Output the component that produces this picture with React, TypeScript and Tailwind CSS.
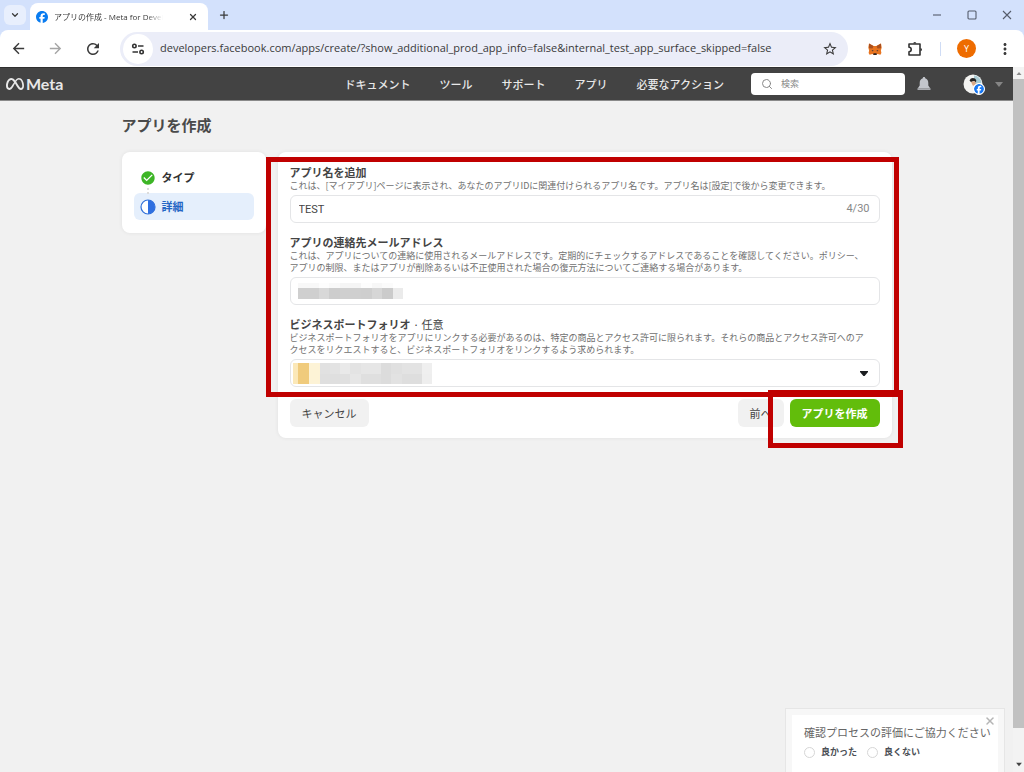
import { useState, type ReactNode } from "react";
import { FaFacebook, FaMeta } from "react-icons/fa6";
import {
  MdArrowBack,
  MdArrowForward,
  MdCheckCircle,
  MdMoreVert,
  MdRefresh,
  MdStarBorder,
} from "react-icons/md";
import { ChevronDown, Plus, Search, X } from "lucide-react";

const NAV_LINKS = ["ドキュメント", "ツール", "サポート", "アプリ", "必要なアクション"];

const WINDOW_BUTTONS = [
  { label: "最小化", path: "M1 5h8" },
  { label: "最大化", path: "M2 1h6a1 1 0 0 1 1 1v6a1 1 0 0 1-1 1H2a1 1 0 0 1-1-1V2a1 1 0 0 1 1-1z" },
  { label: "閉じる", path: "M1 1l8 8M9 1L1 9" },
];

const EMAIL_MOSAIC = [
  { height: "h-[5px]", colors: ["#f8f8f8", "#f8f8f8", "#fdfdfd", "#f9f9f9", "#f5f5f5", "#f5f5f5", "#fdfdfd", "#f7f7f7", "#fbfbfb", "#ffffff"] },
  { height: "h-[11px]", colors: ["#cfcfcf", "#cfcfcf", "#d8d8d8", "#cdcdcd", "#cfcfcf", "#cfcfcf", "#cecece", "#d6d6d6", "#cbcbcb", "#ebebeb"] },
];

const PORTFOLIO_MOSAIC = [
  { height: "h-[11px]", colors: ["#e1e1e1", "#e3e3e3", "#e9e9e9", "#e3e3e3", "#e6e6e6", "#e6e6e6", "#dcdcdc", "#e0e0e0", "#e3e3e3", "#e3e3e3", "#efefef"] },
  { height: "h-[10px]", colors: ["#dfdfdf", "#dfdfdf", "#e0e0e0", "#e6e6e6", "#dfdfdf", "#dfdfdf", "#dcdcdc", "#e2e2e2", "#dedede", "#dedede", "#eeeeee"] },
];

function TuneIcon() {
  return (
    <svg viewBox="0 0 14 14" className="size-3.5" fill="none" stroke="#333" strokeWidth="1.6">
      <circle cx="3.4" cy="4" r="1.7" />
      <path d="M7 4h5.5M1.5 10h5.5" />
      <circle cx="10.6" cy="10" r="1.7" />
    </svg>
  );
}

function FoxIcon() {
  return (
    <svg viewBox="0 0 14 14" className="size-3.5">
      <path d="M1 1.500l4.500 2.500h3L13 1.500l.7 4-.8 3 .5 2.400-1 1.800-3-.6-1.100 1H5.700l-1.100-1-3 .6-1-1.800.5-2.400-.8-3z" fill="#e8741f" />
      <path d="M1 1.500l4.500 2.500-1 2.500L1 6.200zM13 1.500L8.500 4l1 2.500 3.500-.3z" fill="#a9501f" />
      <path d="M3.500 8l2 .4-.6 1.200zM10.500 8l-2 .4.600 1.200z" fill="#263040" />
      <path d="M5.500 11.200h3l.3 1.200-.8.700H6l-.8-.7z" fill="#2b2320" />
    </svg>
  );
}

function PuzzleIcon() {
  return (
    <svg viewBox="0 0 18 18" className="size-[18px]" fill="none" stroke="#333" strokeWidth="1.6" strokeLinejoin="round">
      <path d="M3 4h11v11H3v-3.300a2.200 2.200 0 0 0 0-4.400z" />
      <path d="M7.200 3.600a1.600 1.600 0 0 1 3.200 0zM14.400 8a1.600 1.600 0 0 1 0 3.200z" fill="#333" stroke="none" />
    </svg>
  );
}

function BellIcon() {
  return (
    <svg viewBox="0 0 14 14" className="size-3.5" fill="#c3c6cc">
      <path d="M7 0c.8 0 1.200.5 1.200 1.200C10.300 1.800 11.300 3.500 11.300 6v2.500L13 11H1l1.700-2.500V6c0-2.500 1-4.200 3.100-4.800C5.800.5 6.200 0 7 0z" />
      <path d="M.5 11.300h13v1.500H.5z" />
    </svg>
  );
}

function HalfCircleIcon() {
  return (
    <svg viewBox="0 0 16 16" className="size-4">
      <circle cx="8" cy="8" r="7" fill="#fff" stroke="#2f6fd8" strokeWidth="1.2" />
      <path d="M8 1a7 7 0 0 1 0 14z" fill="#2f6fe0" />
    </svg>
  );
}

function BrowserChrome() {
  return (
    <header className="bg-[#d3e1fc] font-['Open_Sans','Noto_Sans_CJK_JP',sans-serif] text-[#3a3a3a]">
      <div className="flex h-[30px] items-center pl-1">
        <button aria-label="タブを検索" className="flex h-5 w-[22px] items-center justify-center rounded-md bg-[#e8effd]">
          <ChevronDown className="size-2.5" strokeWidth={3} />
        </button>
        <div className="ml-1 flex h-[27px] w-[178px] items-center self-end rounded-t-lg bg-white pr-2.5 pl-1.5">
          <FaFacebook className="size-3 shrink-0 text-[#0a7cf0]" />
          <span className="ml-1.5 mask-r-from-85% text-[8px] whitespace-nowrap">
            アプリの作成 - Meta for Devel
          </span>
          <button aria-label="タブを閉じる" className="ml-auto">
            <X className="size-2.5" strokeWidth={3} />
          </button>
        </div>
        <button aria-label="新しいタブ" className="ml-2.5">
          <Plus className="size-3" strokeWidth={2.5} />
        </button>
        <div className="ml-auto flex items-center gap-[25px] pr-3">
          {WINDOW_BUTTONS.map(({ label, path }) => (
            <button key={label} aria-label={label}>
              <svg viewBox="0 0 10 10" className="size-2.5" fill="none" stroke="#555c6b" strokeWidth="1.1">
                <path d={path} />
              </svg>
            </button>
          ))}
        </div>
      </div>

      <div className="flex h-[37px] items-center rounded-t-lg bg-white px-2.5">
        <div className="flex items-center gap-5">
          <button aria-label="戻る">
            <MdArrowBack className="size-[17px]" />
          </button>
          <button aria-label="進む" className="text-[#a5a5a5]">
            <MdArrowForward className="size-[17px]" />
          </button>
          <button aria-label="再読み込み">
            <MdRefresh className="size-[18px]" />
          </button>
        </div>
        <div className="ml-[18px] flex h-[34px] flex-1 items-center rounded-full bg-[#ebedf8] pr-2.5 pl-[3px]">
          <button aria-label="サイト情報" className="flex size-[30px] items-center justify-center rounded-full bg-white">
            <TuneIcon />
          </button>
          <input
            aria-label="アドレスバー"
            className="ml-[7px] min-w-0 flex-1 bg-transparent text-[11px] outline-none"
            defaultValue="developers.facebook.com/apps/create/?show_additional_prod_app_info=false&internal_test_app_surface_skipped=false"
          />
          <button aria-label="ブックマーク">
            <MdStarBorder className="size-4" />
          </button>
        </div>
        <div className="ml-5 flex items-center">
          <button aria-label="MetaMask">
            <FoxIcon />
          </button>
          <button aria-label="拡張機能" className="ml-6">
            <PuzzleIcon />
          </button>
          <span className="ml-4 h-3.5 w-px bg-[#cfdcf5]" />
          <button className="ml-4 flex size-[19px] items-center justify-center rounded-full bg-[#ee6c00] text-[9px] text-white">
            Y
          </button>
          <button aria-label="メニュー" className="ml-5">
            <MdMoreVert className="size-[18px]" />
          </button>
        </div>
      </div>
    </header>
  );
}

function SiteHeader() {
  return (
    <header className="flex h-[34px] items-center border-y border-[#2f2f2f] border-b-[#8a8a8a] bg-[#434343] pr-2.5 pl-1.5 text-[#e8e8e8]">
      <a href="#" className="flex items-center gap-0.5">
        <FaMeta className="size-[18px]" />
        <span className="font-['Lato',sans-serif] text-base leading-4 font-bold">Meta</span>
      </a>
      <nav className="ml-auto flex gap-[29px] text-[11px] font-medium">
        {NAV_LINKS.map((label) => (
          <a key={label} href="#">
            {label}
          </a>
        ))}
      </nav>
      <label className="ml-[27px] flex h-[22px] w-[154px] items-center rounded-sm bg-white pl-2.5 text-[#888]">
        <Search className="size-3" />
        <input
          aria-label="検索"
          placeholder="検索"
          className="ml-2 w-24 text-[9px] outline-none placeholder:text-[#888]"
        />
      </label>
      <button aria-label="お知らせ" className="ml-3">
        <BellIcon />
      </button>
      <button aria-label="アカウント" className="ml-8 flex items-center gap-3">
        <span className="relative block">
          <svg viewBox="0 0 20 20" className="size-5">
            <circle cx="10" cy="10" r="9.500" fill="#f4f4f2" />
            <path d="M11 1.500a8 8 0 0 1 7.500 7L14 12l-3-4z" fill="#a9cbd4" />
            <path d="M6.500 6.500Q8 3 12 4.500q2 1.500 1 4L11 7l-3 1z" fill="#242424" />
            <path d="M8 8l4-1 1 3-3 2z" fill="#d9a887" />
          </svg>
          <FaFacebook className="absolute -right-0.5 -bottom-px size-3 rounded-full border border-white bg-white text-[#1877f2]" />
        </span>
        <svg viewBox="0 0 8 5" className="h-[5px] w-2">
          <path d="M0 0h8L4 5z" fill="#858585" />
        </svg>
      </button>
    </header>
  );
}

function Mosaic({ rows, className }: { rows: typeof EMAIL_MOSAIC; className: string }) {
  return (
    <div className={className}>
      {rows.map(({ height, colors }, i) => (
        <div key={i} className={`flex ${height}`}>
          {colors.map((color, j) => (
            <span key={j} className="flex-1" style={{ backgroundColor: color }} />
          ))}
        </div>
      ))}
    </div>
  );
}

function Field({
  id,
  title,
  optional,
  help,
  children,
}: {
  id: string;
  title: string;
  optional?: string;
  help: string[];
  children: ReactNode;
}) {
  return (
    <div>
      <label htmlFor={id} className="block text-[11px] leading-4 font-bold text-[#444]">
        {title}
        {optional && <span className="font-normal"> · {optional}</span>}
      </label>
      <p className="text-[9px] leading-3 text-[#707070]">
        {help.map((line) => (
          <span key={line} className="block whitespace-nowrap">
            {line}
          </span>
        ))}
      </p>
      <div className="relative mt-[3px]">{children}</div>
    </div>
  );
}

const inputClass =
  "block h-7 w-full appearance-none rounded-md border border-[#e4e5e7] bg-white px-2 font-['Roboto',sans-serif] text-[11px] text-[#444] outline-none";

function CreateAppForm() {
  const [name, setName] = useState("TEST");

  return (
    <form
      className="relative flex-1 rounded-lg bg-white px-3 pt-3 pb-[11px] shadow-[0_0_4px_rgba(0,0,0,0.07)]"
      onSubmit={(e) => e.preventDefault()}
    >
      <div className="space-y-[11px]">
        <Field
          id="app_name"
          title="アプリ名を追加"
          help={["これは、[マイアプリ]ページに表示され、あなたのアプリIDに関連付けられるアプリ名です。アプリ名は[設定]で後から変更できます。"]}
        >
          <input
            id="app_name"
            value={name}
            maxLength={30}
            onChange={(e) => setName(e.target.value)}
            className={inputClass}
          />
          <span className="absolute top-1.5 right-2.5 font-['Roboto',sans-serif] text-[11px] leading-4 text-[#888]">
            {name.length}/30
          </span>
        </Field>

        <Field
          id="email"
          title="アプリの連絡先メールアドレス"
          help={[
            "これは、アプリについての連絡に使用されるメールアドレスです。定期的にチェックするアドレスであることを確認してください。ポリシー、",
            "アプリの制限、またはアプリが削除あるいは不正使用された場合の復元方法についてご連絡する場合があります。",
          ]}
        >
          <input id="email" type="email" className={inputClass} />
          <div className="pointer-events-none absolute top-1.5 left-2">
            <Mosaic rows={EMAIL_MOSAIC} className="w-[106px]" />
          </div>
        </Field>

        <Field
          id="portfolio"
          title="ビジネスポートフォリオ"
          optional="任意"
          help={[
            "ビジネスポートフォリオをアプリにリンクする必要があるのは、特定の商品とアクセス許可に限られます。それらの商品とアクセス許可へのア",
            "クセスをリクエストすると、ビジネスポートフォリオをリンクするよう求められます。",
          ]}
        >
          <select id="portfolio" className={inputClass} />
          <div className="pointer-events-none absolute top-1 left-[3px] flex">
            <span className="w-[5px] bg-[#fbe8b8]" />
            <span className="w-[11px] bg-[#f0cb7c]" />
            <span className="w-[11px] bg-[#fdf3d6]" />
            <Mosaic rows={PORTFOLIO_MOSAIC} className="w-[113px]" />
          </div>
          <svg viewBox="0 0 8 5" className="pointer-events-none absolute top-3 right-3 h-[5px] w-2">
            <path d="M0 0h8v1L4.600 5H3.400L0 1z" fill="#1c1e21" />
          </svg>
        </Field>
      </div>

      <div className="mt-3 flex text-[11px]">
        <button type="button" className="h-7 rounded-md bg-[#f1f1f1] px-3 text-[#444]">
          キャンセル
        </button>
        <button type="button" className="ml-auto h-7 rounded-md bg-[#f1f1f1] px-3 text-[#444]">
          前へ
        </button>
        <button type="submit" className="ml-1.5 h-7 rounded-md bg-[#62bd0b] px-3 font-bold text-white">
          アプリを作成
        </button>
      </div>

      <div className="pointer-events-none absolute top-[5px] -right-[7px] bottom-[41px] -left-3 border-5 border-[#c00000]" />
      <div className="pointer-events-none absolute -right-[11px] -bottom-2.5 h-[58px] w-[135px] border-5 border-[#c00000]" />
    </form>
  );
}

function Steps() {
  return (
    <aside className="w-36 shrink-0 rounded-lg bg-white px-3 pt-3 pb-[13px] text-[11px] font-bold shadow-[0_0_4px_rgba(0,0,0,0.07)]">
      <ol className="space-y-0.5">
        <li className="relative flex h-[27px] items-center gap-1.5 px-1.5 text-[#333]">
          <MdCheckCircle className="size-4 text-[#3db526]" />
          タイプ
          <span className="absolute top-6 left-[13px] h-1.5 border-l-2 border-dotted border-[#dcdcdc]" />
        </li>
        <li className="flex h-[27px] items-center gap-1.5 rounded-md bg-[#e5effc] px-1.5 text-[#2465c4]">
          <HalfCircleIcon />
          詳細
        </li>
      </ol>
    </aside>
  );
}

function Survey() {
  return (
    <section className="absolute right-2 bottom-0 w-[220px] border border-b-0 border-[#e6e6e6] bg-[#f7f7f7] px-1.5 pt-1.5">
      <div className="relative h-[57px] bg-white pt-[9px] pl-3 text-[#666]">
        <p className="text-[11px] leading-4 whitespace-nowrap">確認プロセスの評価にご協力ください</p>
        <div className="mt-1.5 flex gap-2.5 text-[9px] leading-3 font-bold text-[#4b4f56]">
          {["良かった", "良くない"].map((label) => (
            <label key={label} className="flex items-center gap-1.5">
              <input
                type="radio"
                name="rating"
                className="size-[11px] appearance-none rounded-full border border-[#d6d6d6] bg-white"
              />
              {label}
            </label>
          ))}
        </div>
        <button aria-label="閉じる" className="absolute top-0 right-0.5 text-[#b5b5b5]">
          <X className="size-3" strokeWidth={3} />
        </button>
      </div>
    </section>
  );
}

function ScrollBar() {
  return (
    <div className="flex w-[11px] shrink-0 flex-col items-center bg-[#f3f3f3]">
      <svg viewBox="0 0 12 12" className="size-3">
        <path d="M3.500 8h5L6 5z" fill="#8b8b8b" />
      </svg>
      <div className="w-full flex-1 bg-[#c1c1c1]" />
      <div className="h-[30px]" />
      <svg viewBox="0 0 12 12" className="size-3.5">
        <path d="M3.500 4h5L6 7z" fill="#444" />
      </svg>
    </div>
  );
}

export default function App() {
  return (
    <div className="flex min-h-screen flex-col bg-white">
      <BrowserChrome />
      <div className="flex flex-1 font-['Noto_Sans_CJK_JP',sans-serif]">
        <div className="relative flex-1 bg-[#f1f1f1]">
          <SiteHeader />
          <main className="mx-auto max-w-[770px] pt-3">
            <h1 className="text-[15px] leading-6 font-bold text-[#4a4a4a]">アプリを作成</h1>
            <div className="mt-[15px] flex items-start gap-3">
              <Steps />
              <CreateAppForm />
            </div>
          </main>
          <Survey />
        </div>
        <ScrollBar />
      </div>
    </div>
  );
}
